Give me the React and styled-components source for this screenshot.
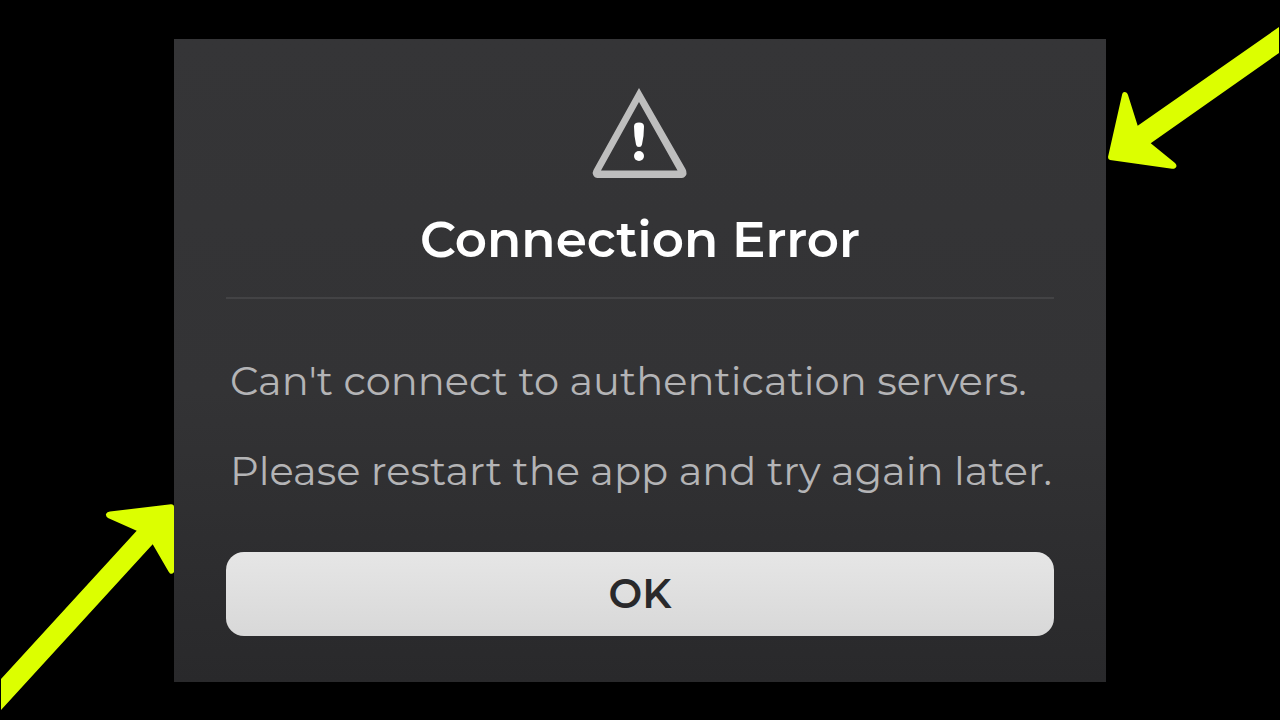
import styled, { createGlobalStyle } from "styled-components";

const GlobalStyle = createGlobalStyle`
    * {
        box-sizing: border-box;
    }
    body {
        margin: 0;
        background: #000;
        font-family: Montserrat, Inter, "Liberation Sans", sans-serif;
    }
`;

const Stage = styled.main`
    display: grid;
    grid-template-columns: 1fr minmax(0, 932px) 1fr;
    min-height: 100vh;
    overflow: hidden;
`;

const Side = styled.div`
    display: flex;
    align-items: ${({ $end }) => ($end ? "flex-end" : "flex-start")};
    justify-content: ${({ $end }) => ($end ? "flex-end" : "flex-start")};
    overflow: hidden;
    svg {
        display: block;
        flex: none;
        fill: #dcff00;
    }
`;

const Dialog = styled.section`
    align-self: center;
    display: flex;
    flex-direction: column;
    padding: 48px 52px 46px;
    background: linear-gradient(#353537, #333335 55%, #29292b);
`;

const WarningIcon = styled.svg`
    display: block;
    align-self: center;
    width: 96px;
    height: 92px;
`;

const Title = styled.h1`
    margin: 29px 0 25px;
    color: #fff;
    font-size: 50px;
    font-weight: 600;
    line-height: 64px;
    text-align: center;
`;

const Divider = styled.hr`
    width: 100%;
    height: 2px;
    margin: 0;
    border: 0;
    background: #434345;
`;

const Message = styled.div`
    display: flex;
    flex-direction: column;
    gap: 40px;
    padding: 57px 0 56px 4px;
    p {
        margin: 0;
        color: #b4b4b6;
        font-size: 40px;
        line-height: 50px;
        white-space: nowrap;
    }
`;

const OkButton = styled.button`
    height: 84px;
    border: 0;
    border-radius: 18px;
    background: linear-gradient(#e6e6e6, #d8d8d8);
    color: #29292b;
    font-family: inherit;
    font-size: 40px;
    font-weight: 600;
    cursor: pointer;
`;

function App() {
    return (
        <>
            <GlobalStyle />
            <Stage>
                <Side $end>
                    <svg width="174" height="216" viewBox="0 0 174 216" aria-hidden="true">
                        <path d="M1 175 L136.7 26.7 L108 14 Q105.5 12.5 106 10 Q107 7.5 110 7.5 L171 .3 Q174 .3 174 3 V68 Q173 70.5 170 69.5 L168.5 67.5 L152.7 40.3 L1 206Z" />
                    </svg>
                </Side>
                <Dialog role="alertdialog" aria-labelledby="title" aria-describedby="message">
                    <WarningIcon viewBox="0 0 96 92" aria-hidden="true">
                        <path
                            fill="#bebebe"
                            fillRule="evenodd"
                            d="M47 1 L93.5 82 Q96 87 92.5 90 Q91.5 91 89.5 91 H5.5 Q2.5 91 1.2 88 Q0 86 1.5 83Z M47 15 L9 83.5 H85.5Z"
                        />
                        <path fill="#fff" d="M42 39.5 Q42 35.5 47 35.5 Q52 35.5 52 39.5 Q52 49 50 57.5 Q49.5 60 47 60 Q44.5 60 44 57.5 Q42 49 42 39.5Z" />
                        <circle cx="47" cy="69" r="5" fill="#fff" />
                    </WarningIcon>
                    <Title id="title">Connection Error</Title>
                    <Divider />
                    <Message id="message">
                        <p>Can't connect to authentication servers.</p>
                        <p>Please restart the app and try again later.</p>
                    </Message>
                    <OkButton type="button">OK</OkButton>
                </Dialog>
                <Side>
                    <svg width="174" height="170" viewBox="0 0 174 170" aria-hidden="true">
                        <path d="M173 27 L31.7 125.7 L22 95 Q21 92 18.5 92 Q16.5 92 16 95 L2 157 Q2 159.5 4 160 L66 168.8 Q70 169 70.5 166 Q70.5 164.5 69 163 L44.7 143.3 L173 53Z" />
                    </svg>
                </Side>
            </Stage>
        </>
    );
}
export default App;
